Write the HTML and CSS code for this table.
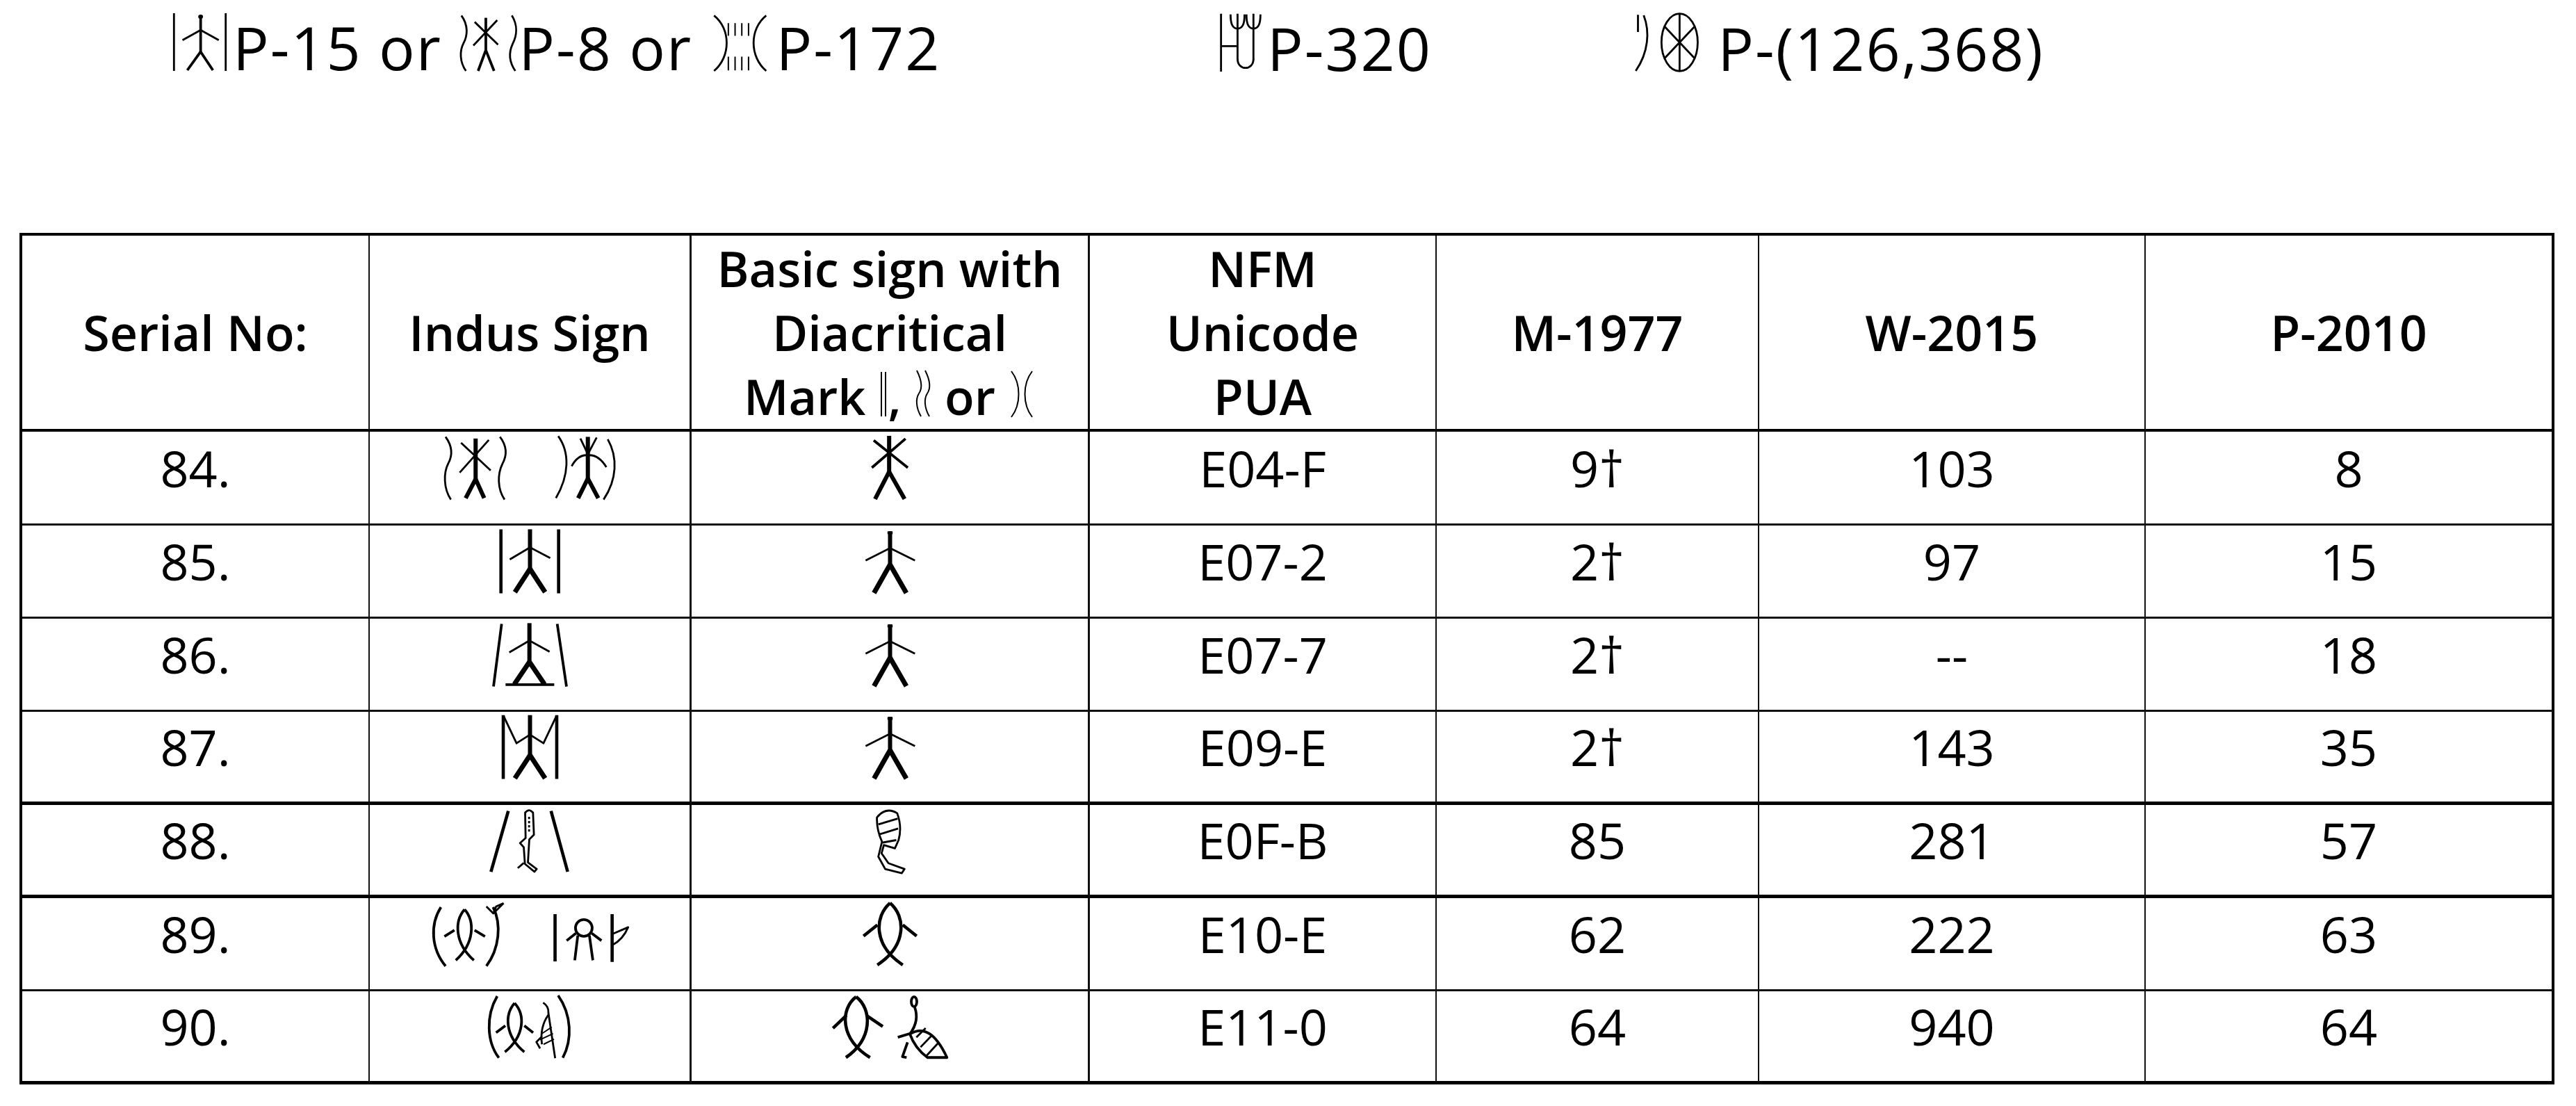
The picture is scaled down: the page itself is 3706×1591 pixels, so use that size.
FILE: index.html
```html
<!DOCTYPE html>
<html lang="en">
<head>
<meta charset="utf-8">
<title>Indus signs with diacritical marks</title>
<link rel="stylesheet" href="styles.css">
</head>
<body>
<div class="legend">
  <div class="lg-item"><svg class="sg g1" viewBox="122 52 206 256" preserveAspectRatio="none">
      <path class="w2" d="M128 55 V305 M322 55 V305"/>
      <circle class="dot" cx="228" cy="70" r="9"/>
      <path class="w3" d="M228 70 V225"/>
      <path class="w2" d="M160 172 L228 128 L296 172"/>
      <path class="w3" d="M228 222 L178 302 M228 222 L274 302"/>
    </svg><span>P-15 or&nbsp;</span><svg class="sg g2" viewBox="1195 55 220 250" preserveAspectRatio="none">
      <path class="w2" d="M1205 62 C1232 105 1228 150 1213 182 C1198 215 1198 262 1222 302"/>
      <path class="w2" d="M1395 62 C1418 105 1414 150 1398 185 C1384 220 1384 262 1408 302"/>
      <path class="w3" d="M1297 72 V215"/>
      <path class="w2" d="M1255 90 L1343 188 M1250 192 L1340 82"/>
      <path class="w3" d="M1297 212 L1268 302 M1297 212 L1328 302"/>
    </svg><span>P-8 or&nbsp;</span><svg class="sg g3" viewBox="842 55 76 250" preserveAspectRatio="none">
      <path class="w2" d="M848 62 C868 120 868 240 848 302 M910 62 C890 120 890 240 910 302"/>
      <path class="w1" d="M865 95 V150 M873 95 V150 M881 95 V150 M889 95 V150 M865 240 V300 M873 240 V300 M881 240 V300 M889 240 V300"/>
    </svg><span>P-172</span></div>
  <div class="lg-item"><svg class="sg g4" viewBox="20 50 140 258" preserveAspectRatio="none">
      <path class="w2" d="M28 55 V305 M28 195 H80"/>
      <path class="w2" d="M58 58 C58 100 64 118 80 120 C96 118 102 100 102 58 M80 55 V255"/>
      <path class="w2" d="M108 58 C108 100 114 118 130 120 C146 118 152 100 152 58 M130 55 V255"/>
      <path class="w2" d="M80 250 C80 302 130 302 130 250"/>
    </svg><span>P-320</span></div>
  <div class="lg-item"><svg class="sg g5" viewBox="1325 48 210 258" preserveAspectRatio="none">
      <path class="w2" d="M1337 58 V132 M1355 60 C1375 130 1370 220 1330 300"/>
      <ellipse class="w2" cx="1468" cy="177" rx="57" ry="124"/>
      <path class="w2" d="M1468 53 V301 M1422 110 L1514 244 M1422 244 L1514 110"/>
    </svg><span>&nbsp;P-(126,368)</span></div>
</div>

<table class="signs">
  <colgroup>
    <col class="c1"><col class="c2"><col class="c3"><col class="c4"><col class="c5"><col class="c6"><col class="c7">
  </colgroup>
  <thead>
    <tr>
      <th>Serial No:</th>
      <th>Indus Sign</th>
      <th>Basic sign with<br>Diacritical<br>Mark <svg class="sg mk-bar" viewBox="0 0 14 64"><path class="w1" d="M4 0 V64 M10 0 V64"/></svg>, <svg class="sg mk-wave" viewBox="0 0 26 66"><path class="w1" d="M4 0 C12 16 12 26 7 33 C2 41 3 54 10 66 M16 0 C24 16 24 26 19 33 C14 41 15 54 22 66"/></svg> or <svg class="sg mk-paren" viewBox="0 0 40 66"><path class="w1" d="M5 0 C19 18 19 48 5 66 M35 0 C21 18 21 48 35 66"/></svg></th>
      <th>NFM<br>Unicode<br>PUA</th>
      <th>M-1977</th>
      <th>W-2015</th>
      <th>P-2010</th>
    </tr>
  </thead>
  <tbody>
    <tr class="r-first">
      <td>84.</td>
      <td><svg class="sg s84" viewBox="170 35 760 280" preserveAspectRatio="none">
        <path class="w2" d="M185 45 C215 85 215 125 196 158 C177 195 175 260 208 308"/>
        <path class="w2" d="M420 45 C452 85 450 125 430 160 C410 200 408 262 440 308"/>
        <path class="w5" d="M315 52 V232"/>
        <path class="w2" d="M252 70 L380 186 M246 195 L372 58"/>
        <path class="w5" d="M315 222 L272 302 M315 222 L352 302"/>
        <path class="w2" d="M672 42 C722 110 720 205 662 302"/>
        <path class="w2" d="M886 55 C930 130 926 225 868 308"/>
        <path class="w5" d="M800 45 V228"/>
        <path class="w2" d="M730 168 Q758 118 800 122 Q846 118 880 172"/>
        <path class="w2" d="M768 52 L800 118 L838 48"/>
        <path class="w5" d="M800 220 L758 302 M800 220 L845 302"/>
      </svg></td>
      <td><svg class="sg b84" viewBox="300 20 175 165" preserveAspectRatio="none">
        <path class="w5" d="M385 25 V122"/>
        <path class="w3" d="M318 36 L466 102 M310 102 L456 32"/>
        <path class="w5" d="M385 112 L324 178 M385 112 L452 178"/>
      </svg></td>
      <td>E04-F</td>
      <td>9†</td>
      <td>103</td>
      <td>8</td>
    </tr>
    <tr>
      <td>85.</td>
      <td><svg class="sg s85" viewBox="400 425 290 285" preserveAspectRatio="none">
        <path class="w4" d="M420 432 V700 M668 432 V700"/>
        <path class="w5" d="M545 432 V600"/>
        <path class="w2" d="M458 558 L545 508 L632 552"/>
        <path class="w6" d="M545 598 L480 695 M545 598 L610 695"/>
      </svg></td>
      <td><svg class="sg bman" viewBox="270 245 230 162" preserveAspectRatio="none">
        <path class="w5" d="M385 252 V340"/>
        <path class="w3" d="M374 256 H396"/>
        <path class="w2" d="M280 323 L385 293 L492 323"/>
        <path class="w6" d="M385 333 L316 402 M385 333 L455 402"/>
      </svg></td>
      <td>E07-2</td>
      <td>2†</td>
      <td>97</td>
      <td>15</td>
    </tr>
    <tr>
      <td>86.</td>
      <td><svg class="sg s86" viewBox="375 815 345 280" preserveAspectRatio="none">
        <path class="w3" d="M425 825 L390 1088 M665 825 L705 1088"/>
        <path class="w5" d="M545 822 V988"/>
        <path class="w2" d="M458 945 L545 895 L632 942"/>
        <path class="w6" d="M545 985 L480 1078 M545 985 L610 1078"/>
        <path class="w3" d="M442 1080 H652"/>
      </svg></td>
      <td><svg class="sg bman" viewBox="270 245 230 162" preserveAspectRatio="none">
        <path class="w5" d="M385 252 V340"/>
        <path class="w3" d="M374 256 H396"/>
        <path class="w2" d="M280 323 L385 293 L492 323"/>
        <path class="w6" d="M385 333 L316 402 M385 333 L455 402"/>
      </svg></td>
      <td>E07-7</td>
      <td>2†</td>
      <td>--</td>
      <td>18</td>
    </tr>
    <tr class="r-heavy">
      <td>87.</td>
      <td><svg class="sg s87" viewBox="415 1205 260 280" preserveAspectRatio="none">
        <path class="w4" d="M430 1210 V1478 M660 1210 V1478"/>
        <path class="w5" d="M545 1210 V1385"/>
        <path class="w2" d="M432 1215 L487 1328 L545 1292 L603 1328 L658 1215"/>
        <path class="w6" d="M545 1378 L480 1475 M545 1378 L610 1475"/>
      </svg></td>
      <td><svg class="sg bman" viewBox="270 245 230 162" preserveAspectRatio="none">
        <path class="w5" d="M385 252 V340"/>
        <path class="w3" d="M374 256 H396"/>
        <path class="w2" d="M280 323 L385 293 L492 323"/>
        <path class="w6" d="M385 333 L316 402 M385 333 L455 402"/>
      </svg></td>
      <td>E09-E</td>
      <td>2†</td>
      <td>143</td>
      <td>35</td>
    </tr>
    <tr class="r-heavy">
      <td>88.</td>
      <td><svg class="sg s88" viewBox="370 55 355 295" preserveAspectRatio="none">
        <path class="w4" d="M455 75 L380 338 M640 75 L712 338"/>
        <path class="w2" d="M528 82 Q545 62 562 82 L566 178 L546 198 L540 298 L578 326 L568 338 L527 304 L522 232 L506 214 L530 192 Z"/>
        <path class="w2" d="M545 100 V110 M545 118 V128 M545 136 V146 M545 154 V164"/>
        <path class="w2" d="M522 300 L496 322"/>
      </svg></td>
      <td><svg class="sg b88" viewBox="315 915 145 170" preserveAspectRatio="none">
        <path class="w2" d="M332 945 Q372 918 420 935 Q442 968 426 1000 L410 1020 L362 1012 L352 1032 L382 1056 L452 1070 L440 1080 L368 1070 L338 1040 L354 1004 Q330 975 332 945 Z"/>
        <path class="w2" d="M338 962 L422 948 M343 986 L424 972 M356 1006 L416 1000"/>
      </svg></td>
      <td>E0F-B</td>
      <td>85</td>
      <td>281</td>
      <td>57</td>
    </tr>
    <tr>
      <td>89.</td>
      <td><svg class="sg s89" viewBox="105 455 875 295" preserveAspectRatio="none">
        <path class="w3" d="M160 485 C112 560 118 665 180 740"/>
        <path class="w3" d="M262 495 C218 545 218 640 302 715 M262 495 C306 545 306 640 224 715"/>
        <path class="w3" d="M175 612 L218 585 M305 585 L350 612"/>
        <path class="w3" d="M385 485 C422 560 412 665 356 740"/>
        <path class="w2" d="M356 482 L386 512 L430 468 M386 512 L398 482 L430 468"/>
        <path class="w4" d="M652 515 V720 M898 515 V722"/>
        <circle class="w3" cx="776" cy="575" r="36"/>
        <path class="w3" d="M702 630 L742 598 M810 598 L852 630 M750 608 L737 715 M800 608 L815 715"/>
        <path class="w2" d="M898 602 L967 572 Q945 625 898 650"/>
      </svg></td>
      <td><svg class="sg b89" viewBox="260 1140 250 170" preserveAspectRatio="none">
        <path class="w4" d="M385 1150 C318 1182 310 1252 440 1300 M385 1150 C452 1182 460 1252 330 1300"/>
        <path class="w4" d="M270 1230 L330 1203 M440 1203 L500 1230"/>
      </svg></td>
      <td>E10-E</td>
      <td>62</td>
      <td>222</td>
      <td>63</td>
    </tr>
    <tr class="r-last">
      <td>90.</td>
      <td><svg class="sg s90" viewBox="350 860 390 290" preserveAspectRatio="none">
        <path class="w3" d="M405 875 C355 960 360 1072 412 1140"/>
        <path class="w3" d="M480 905 C436 955 438 1045 522 1115 M480 905 C526 955 524 1045 438 1115"/>
        <path class="w3" d="M400 1032 L440 1002 M522 1002 L560 1032"/>
        <path class="w2" d="M603 903 Q628 918 626 948 L655 1142"/>
        <path class="w2" d="M626 955 Q588 1008 598 1082"/>
        <path class="w1" d="M595 1038 L640 1008 M590 1062 L646 1036 M605 1082 L650 1060"/>
        <path class="w2" d="M598 1048 L574 1072 L590 1100"/>
        <path class="w3" d="M668 872 C726 955 730 1062 688 1140"/>
      </svg></td>
      <td><svg class="sg b90" viewBox="130 1370 510 165" preserveAspectRatio="none">
        <path class="w4" d="M240 1380 C170 1410 170 1482 300 1527 M240 1380 C310 1410 312 1482 196 1527"/>
        <path class="w4" d="M140 1456 L198 1425 M284 1425 L355 1452"/>
        <circle class="w3" cx="490" cy="1392" r="12"/>
        <path class="w3" d="M492 1404 Q515 1438 472 1470"/>
        <path class="w3" d="M472 1470 Q560 1440 632 1527 L548 1527 Q494 1505 472 1470 Z"/>
        <path class="w2" d="M500 1478 L540 1456 M518 1502 L566 1474 M545 1522 L594 1492"/>
        <path class="w3" d="M478 1468 L420 1478 M462 1490 L440 1525 L458 1527"/>
      </svg></td>
      <td>E11-0</td>
      <td>64</td>
      <td>940</td>
      <td>64</td>
    </tr>
  </tbody>
</table>
</body>
</html>
```

FILE: styles.css
```css
html, body {
  margin: 0;
  padding: 0;
  background: #fff;
}

body {
  width: 3706px;
  height: 1591px;
  overflow: hidden;
  font-family: "Open Sans", "Noto Sans", sans-serif;
  color: #000;
}

/* ---------- legend line ---------- */
.legend {
  box-sizing: border-box;
  height: 110px;
  padding: 18px 0 0 248px;
  display: grid;
  grid-template-columns: 1505px 598px auto;
  font-size: 86px;
  line-height: 86px;
  letter-spacing: 2px;
}

.lg-item {
  white-space: nowrap;
}

.legend svg {
  vertical-align: -2px;
}

/* ---------- sign strokes ---------- */
.sg {
  overflow: visible;
}

.sg path,
.sg circle,
.sg ellipse {
  fill: none;
  stroke: #000;
  stroke-linejoin: round;
  vector-effect: non-scaling-stroke;
}

.sg .dot {
  fill: #000;
  stroke: none;
}

.w1 { stroke-width: 2px; }
.w2 { stroke-width: 2.8px; }
.w3 { stroke-width: 3.8px; }
.w4 { stroke-width: 4.6px; }
.w5 { stroke-width: 6px; }
.w6 { stroke-width: 7px; }

.g1 { width: 79px; height: 85px; margin-right: 8px; }
.g2 { width: 84px; height: 83px; margin-right: 2px; }
.g3 { width: 92px; height: 83px; margin-right: 4px; }
.g4 { width: 64px; height: 86px; margin-right: 6px; }
.g5 { width: 96px; height: 86px; }

/* header diacritical marks */
.mk-bar { width: 14px; height: 64px; vertical-align: -2px; }
.mk-wave { width: 26px; height: 66px; vertical-align: -2px; }
.mk-paren { width: 40px; height: 66px; vertical-align: -3px; }

/* indus sign column */
.s84 { width: 253px; height: 96px; }
.s85 { width: 97px; height: 98px; }
.s86 { width: 115px; height: 96px; }
.s87 { width: 87px; height: 96px; }
.s88 { width: 118px; height: 98px; }
.s89 { width: 292px; height: 98px; }
.s90 { width: 130px; height: 97px; }

/* basic sign column */
.b84 { width: 58px; height: 98px; }
.bman { width: 77px; height: 96px; }
.b88 { width: 48px; height: 101px; }
.b89 { width: 83px; height: 101px; }
.b90 { width: 170px; height: 98px; }

td .sg {
  display: block;
  margin: 0 auto;
}

/* ---------- table ---------- */
.signs {
  margin: 225px 0 0 28px;
  width: 3647px;
  table-layout: fixed;
  border-collapse: separate;
  border-spacing: 0;
  border-top: 4px solid #000;
  border-left: 4px solid #000;
}

.c1 { width: 500px; }
.c2 { width: 463px; }
.c3 { width: 573px; }
.c4 { width: 499px; }
.c5 { width: 464px; }
.c6 { width: 556px; }
.c7 { width: 588px; }

.signs th,
.signs td {
  box-sizing: border-box;
  padding: 0;
  text-align: center;
  vertical-align: middle;
  border-right: 2px solid #111;
  border-bottom: 3px solid #111;
}

.signs th:nth-child(2),
.signs td:nth-child(2),
.signs th:nth-child(3),
.signs td:nth-child(3) {
  border-right-width: 3px;
}

.signs th:last-child,
.signs td:last-child {
  border-right: 4px solid #000;
}

.signs th {
  height: 282px;
  font-size: 70px;
  font-weight: 600;
  line-height: 92px;
  border-bottom: 4px solid #000;
}

.signs td {
  height: 134px;
  padding-bottom: 28px;
  font-size: 72px;
  line-height: 1.2;
}

.signs .r-first td {
  height: 135px;
}

.signs .r-heavy td,
.signs .r-last td {
  border-bottom: 5px solid #000;
}
```
